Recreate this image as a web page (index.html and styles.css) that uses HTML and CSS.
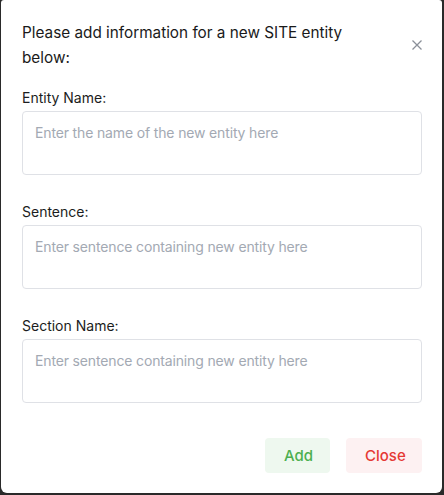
FILE: index.html
```html
<!DOCTYPE html>
<html lang="en">
<head>
<meta charset="utf-8">
<title>Add entity</title>
<link rel="stylesheet" href="styles.css">
</head>
<body>
<div class="modal">
  <div class="modal-header">
    <h2 class="modal-title">Please add information for a new SITE entity below:</h2>
    <button class="modal-close" aria-label="Close">
      <svg width="10" height="10" viewBox="0 0 10 10"><path d="M0.5 0.5 L9.5 9.5 M9.5 0.5 L0.5 9.5" stroke="#8b9099" stroke-width="1.3" fill="none"/></svg>
    </button>
  </div>
  <div class="modal-body">
    <label class="field">
      <span class="field-label">Entity Name:</span>
      <textarea class="field-input" placeholder="Enter the name of the new entity here"></textarea>
    </label>
    <label class="field">
      <span class="field-label">Sentence:</span>
      <textarea class="field-input" placeholder="Enter sentence containing new entity here"></textarea>
    </label>
    <label class="field">
      <span class="field-label">Section Name:</span>
      <textarea class="field-input" placeholder="Enter sentence containing new entity here"></textarea>
    </label>
  </div>
  <div class="modal-footer">
    <button class="btn btn-add">Add</button>
    <button class="btn btn-close">Close</button>
  </div>
</div>
</body>
</html>
```
FILE: styles.css
```css
html, body {
  margin: 0;
  padding: 0;
  background: #2a2a2a;
  height: 495px;
  overflow: hidden;
}
body {
  font-family: Inter, "Noto Sans", "Liberation Sans", sans-serif;
  color: #1b1d21;
}
.modal {
  margin-left: 1px;
  width: 441px;
  height: 493px;
  box-sizing: border-box;
  background: #fff;
  border-radius: 3px 3px 6px 6px;
  padding: 20px 20px 20px 21px;
  display: flex;
  flex-direction: column;
}
.modal-header {
  display: flex;
  align-items: center;
  justify-content: space-between;
}
.modal-title {
  margin: 0;
  font-size: 15.3px;
  font-weight: 400;
  line-height: 25px;
  max-width: 340px;
  color: #1a1a1a;
}
.modal-close {
  border: 0;
  background: none;
  padding: 0;
  width: 10px;
  height: 10px;
  display: flex;
}
.modal-body {
  display: flex;
  flex-direction: column;
  gap: 27px;
  margin-top: 18px;
}
.field {
  display: flex;
  flex-direction: column;
  gap: 3px;
}
.field-label {
  font-size: 14px;
  line-height: 20px;
  color: #1b1d21;
}
.field-input {
  width: 400px;
  height: 64px;
  box-sizing: border-box;
  border: 1px solid #dfe1e6;
  border-radius: 4px;
  padding: 11px 12px 10px;
  font-family: inherit;
  font-size: 14px;
  letter-spacing: -0.15px;
  line-height: 20px;
  resize: none;
  outline: none;
  color: #1b1d21;
}
.field-input::placeholder {
  color: #a3a9b3;
}
.modal-footer {
  margin-top: auto;
  display: flex;
  justify-content: flex-end;
  gap: 16px;
}
.btn {
  border: 0;
  border-radius: 4px;
  height: 35px;
  padding: 0 19px;
  font-family: inherit;
  font-size: 15px;
  font-weight: 500;
}
.btn-add {
  background: #eef8ef;
  color: #4caf50;
  width: 65px;
}
.btn-close {
  background: #fdf1f2;
  color: #e53935;
  width: 76px;
}
```
